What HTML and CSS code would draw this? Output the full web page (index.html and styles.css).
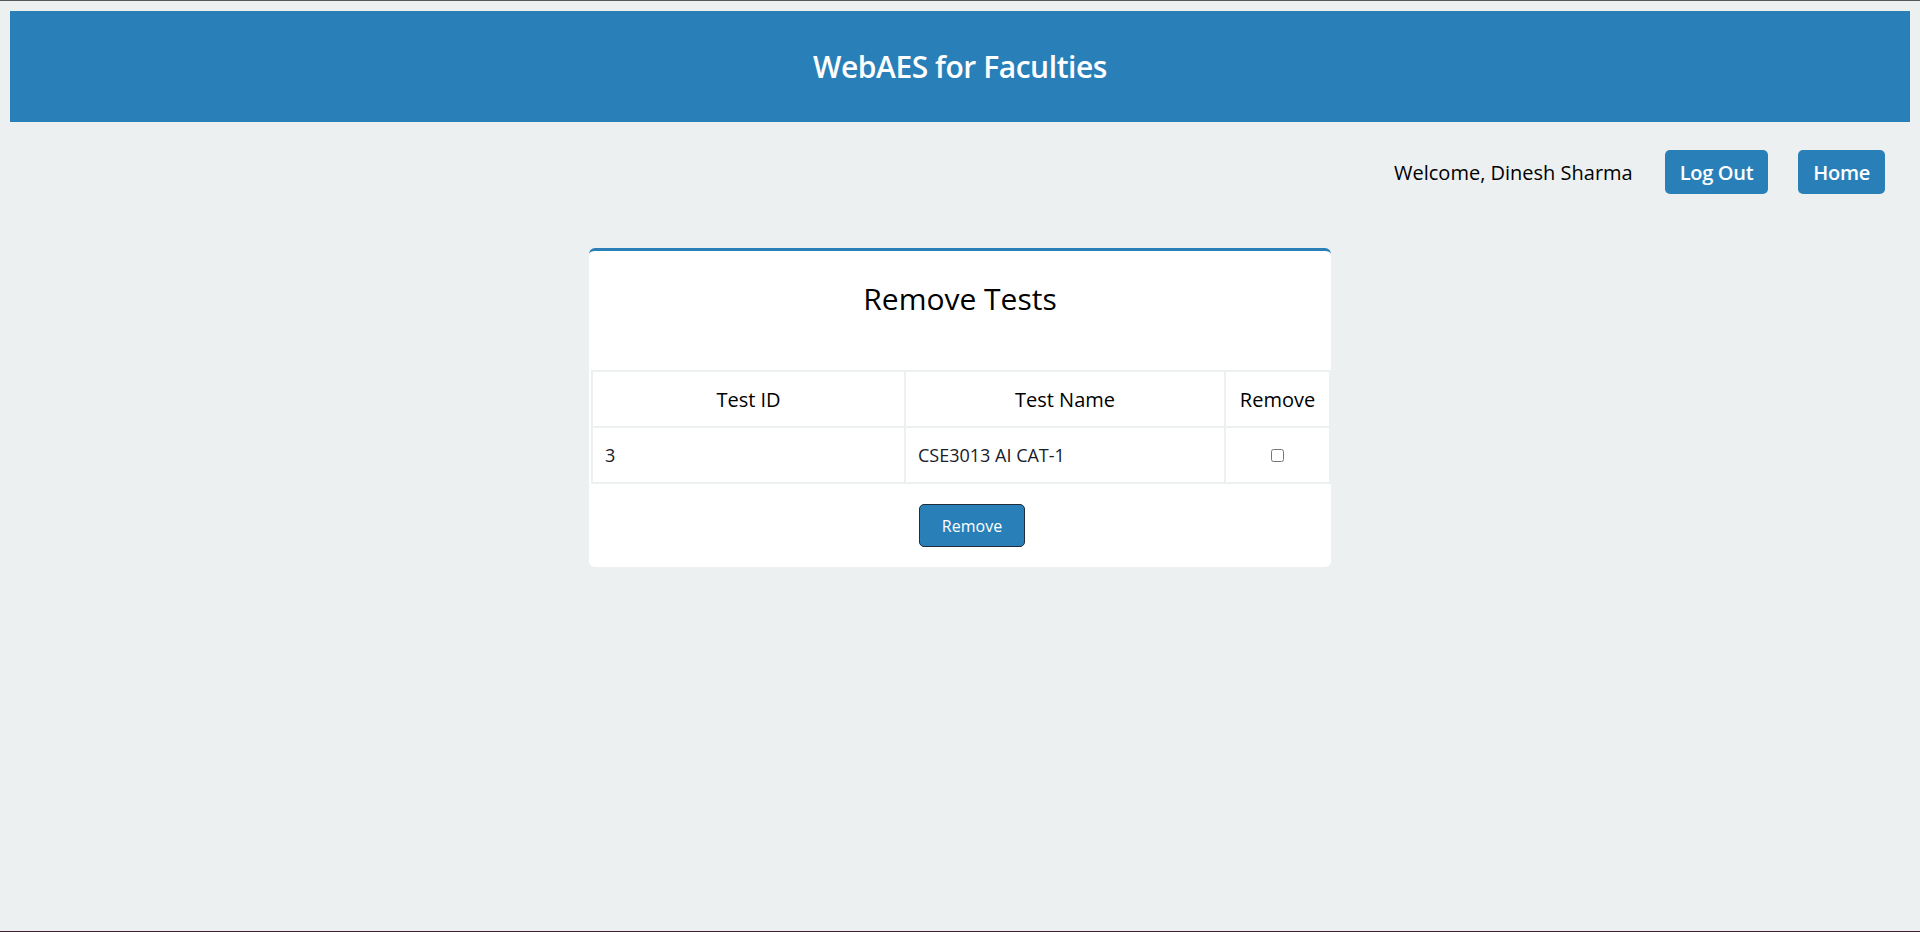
FILE: index.html
```html
<!DOCTYPE html>
<html lang="en">
<head>
<meta charset="utf-8">
<title>WebAES for Faculties</title>
<link rel="stylesheet" href="styles.css">
</head>
<body>
<header class="site-header">
  <h1 class="site-title">WebAES for Faculties</h1>
</header>
<nav class="top-nav">
  <span class="welcome">Welcome, Dinesh Sharma</span>
  <div class="nav-buttons">
    <a class="nav-btn" href="#">Log Out</a>
    <a class="nav-btn" href="#">Home</a>
  </div>
</nav>
<main class="card">
  <h2 class="card-title">Remove Tests</h2>
  <form class="remove-form">
    <table class="tests-table">
      <colgroup>
        <col class="col-id">
        <col class="col-name">
        <col class="col-remove">
      </colgroup>
      <thead>
        <tr>
          <th>Test ID</th>
          <th>Test Name</th>
          <th>Remove</th>
        </tr>
      </thead>
      <tbody>
        <tr>
          <td>3</td>
          <td>CSE3013 AI CAT-1</td>
          <td class="check-cell"><input type="checkbox" class="check"></td>
        </tr>
      </tbody>
    </table>
    <div class="form-actions">
      <button type="button" class="remove-btn">Remove</button>
    </div>
  </form>
</main>
<div class="bottom-edge"></div>
</body>
</html>
```

FILE: styles.css
```css
html {
  border-top: 1px solid #55585b;
  background: #ecf0f1;
}
body {
  margin: 10px;
  background: #ecf0f1;
  font-family: "Open Sans", "Noto Sans", sans-serif;
  color: #000;
}
.site-header {
  height: 111px;
  background: #2980b9;
  display: flex;
  align-items: center;
  justify-content: center;
}
.site-title {
  margin: 0;
  color: #fff;
  font-size: 30px;
  font-weight: 600;
  line-height: 1;
  letter-spacing: -0.45px;
}
.top-nav {
  display: flex;
  justify-content: flex-end;
  align-items: center;
  margin-top: 28px;
  padding-right: 25px;
  gap: 32px;
}
.welcome {
  font-size: 20px;
  color: #000;
}
.nav-buttons {
  display: flex;
  gap: 30px;
}
.nav-btn {
  display: flex;
  align-items: center;
  justify-content: center;
  height: 44px;
  padding: 0 15px;
  background: #2980b9;
  color: #fff;
  font-size: 20px;
  font-weight: 600;
  text-decoration: none;
  border-radius: 5px;
  letter-spacing: -0.3px;
}
.card {
  display: block;
  width: 742px;
  margin: 54px auto 0;
  background: #fff;
  border-top: 3px solid #2980b9;
  border-radius: 6px;
  box-sizing: border-box;
  padding-top: 27px;
}
.card-title {
  margin: 0 0 51px;
  text-align: center;
  font-size: 30px;
  font-weight: 400;
  line-height: 41px;
}
.remove-form {
  margin: 0;
}
.tests-table {
  width: calc(100% - 4px);
  margin: 0 2px;
  border-collapse: collapse;
  table-layout: fixed;
}
.col-id { width: 313px; }
.col-name { width: 320px; }
.col-remove { width: 105px; }
.tests-table th,
.tests-table td {
  border: 2px solid #ecf0f1;
  height: 54px;
  padding: 0 12px;
  vertical-align: middle;
}
.tests-table th {
  font-size: 20px;
  font-weight: 400;
  text-align: center;
}
.tests-table td {
  font-size: 18px;
  color: #17202a;
  text-align: left;
}
.tests-table td.check-cell {
  text-align: center;
}
.check {
  margin: 0;
  width: 13px;
  height: 13px;
}
.form-actions {
  display: flex;
  justify-content: center;
  padding: 20px 0 20px 24px;
}
.remove-btn {
  height: 43px;
  width: 106px;
  background: #2980b9;
  color: #fff;
  border: 1px solid #1f2d3a;
  border-radius: 5px;
  font-family: "Open Sans", "Noto Sans", sans-serif;
  font-size: 16px;
  cursor: pointer;
}
.bottom-edge {
  position: fixed;
  left: 0;
  right: 0;
  bottom: 0;
  height: 1px;
  background: #3b1f2e;
}
```
